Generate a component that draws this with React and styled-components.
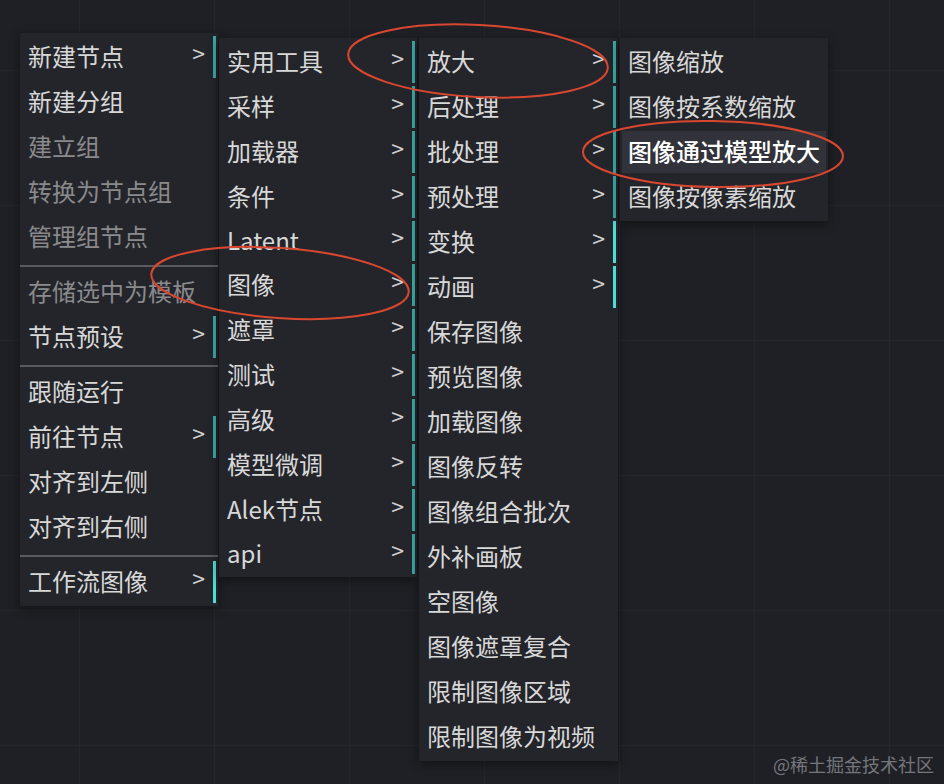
import React from 'react';
import styled, { createGlobalStyle } from 'styled-components';

const GlobalStyle = createGlobalStyle`
    html, body {
        margin: 0;
        padding: 0;
        background: #1f2025;
        overflow: hidden;
    }
`;

const Canvas = styled.div`
    position: relative;
    width: 944px;
    height: 784px;
    background-color: #1f2025;
    background-image:
        linear-gradient(to right, #25262c 1px, transparent 1px),
        linear-gradient(to bottom, #25262c 1px, transparent 1px);
    background-size: 135px 135px;
    background-position: 79px 70px;
    font-family: "Noto Sans CJK SC", "Noto Sans", sans-serif;
`;

const MenuRow = styled.div`
    display: flex;
    align-items: flex-start;
    padding: 33px 0 0 20px;
    gap: 1px;
`;

const Menu = styled.div`
    display: flex;
    flex-direction: column;
    gap: 3px;
    width: ${(p) => p.$width}px;
    margin-top: ${(p) => p.$offset || 0}px;
    margin-left: ${(p) => p.$shift || 0}px;
    padding: 3px 0;
    box-sizing: border-box;
    background: #24252b;
    box-shadow: 0 3px 10px rgba(0, 0, 0, 0.45);
`;

const Entry = styled.div`
    display: flex;
    align-items: center;
    justify-content: space-between;
    height: ${(p) => (p.$latin ? 40 : 42)}px;
    margin: 0 2px;
    padding: 0 8px 0 6px;
    box-sizing: border-box;
    font-size: 24px;
    line-height: 1;
    white-space: nowrap;
    color: ${(p) => (p.$disabled ? '#8a8a8c' : p.$active ? '#ffffff' : '#d8d8d8')};
    font-weight: ${(p) => (p.$active ? 500 : 400)};
    background: ${(p) => (p.$active ? '#31323a' : 'transparent')};
    border-right: ${(p) =>
        p.$sub ? `3px solid ${p.$bright ? '#4fdcd8' : '#3aa8a4'}` : '3px solid transparent'};

    & > span:first-child {
        transform: translateY(-1px);
    }
`;

const Arrow = styled.span`
    font-size: 23px;
    color: #d0d0d0;
    transform: translateY(-4px);
`;

const Separator = styled.div`
    height: 2px;
    margin: 4px 0 1px;
    background: #5a5b60;
`;

const Annotations = styled.svg`
    position: absolute;
    left: 0;
    top: 0;
    pointer-events: none;
`;

const Watermark = styled.div`
    position: absolute;
    right: 10px;
    bottom: 7px;
    font-size: 18px;
    color: #75767c;
    font-family: "Noto Sans CJK SC", sans-serif;
`;

const sep = { sep: true };

const menus = [
    {
        width: 198,
        offset: 0,
        items: [
            { label: '新建节点', sub: true },
            { label: '新建分组' },
            { label: '建立组', disabled: true },
            { label: '转换为节点组', disabled: true },
            { label: '管理组节点', disabled: true },
            sep,
            { label: '存储选中为模板', disabled: true },
            { label: '节点预设', sub: true },
            sep,
            { label: '跟随运行' },
            { label: '前往节点', sub: true },
            { label: '对齐到左侧' },
            { label: '对齐到右侧' },
            sep,
            { label: '工作流图像', sub: true, bright: true },
        ],
    },
    {
        width: 198,
        offset: 5,
        items: ['实用工具', '采样', '加载器', '条件', 'Latent', '图像', '遮罩', '测试', '高级', '模型微调', 'Alek节点', 'api'].map(
            (label) => ({ label, sub: true, latin: /^[A-Za-z]+$/.test(label) })
        ),
    },
    {
        width: 199,
        offset: 5,
        shift: 1,
        items: [
            { label: '放大', sub: true },
            { label: '后处理', sub: true },
            { label: '批处理', sub: true },
            { label: '预处理', sub: true },
            { label: '变换', sub: true, bright: true },
            { label: '动画', sub: true, bright: true },
            { label: '保存图像' },
            { label: '预览图像' },
            { label: '加载图像' },
            { label: '图像反转' },
            { label: '图像组合批次' },
            { label: '外补画板' },
            { label: '空图像' },
            { label: '图像遮罩复合' },
            { label: '限制图像区域' },
            { label: '限制图像为视频' },
        ],
    },
    {
        width: 208,
        offset: 5,
        shift: 1,
        items: [
            { label: '图像缩放' },
            { label: '图像按系数缩放' },
            { label: '图像通过模型放大', active: true },
            { label: '图像按像素缩放' },
        ],
    },
];

const App = () => {
    return (
        <Canvas>
            <GlobalStyle />
            <MenuRow>
                {menus.map((menu, mi) => (
                    <Menu key={mi} $width={menu.width} $offset={menu.offset} $shift={menu.shift}>
                        {menu.items.map((item, i) =>
                            item.sep ? (
                                <Separator key={i} />
                            ) : (
                                <Entry
                                    key={i}
                                    $sub={item.sub}
                                    $bright={item.bright}
                                    $disabled={item.disabled}
                                    $active={item.active}
                                    $latin={item.latin}
                                >
                                    <span>{item.label}</span>
                                    {item.sub && <Arrow>&gt;</Arrow>}
                                </Entry>
                            )
                        )}
                    </Menu>
                ))}
            </MenuRow>
            <Annotations width="944" height="784" viewBox="0 0 944 784">
                <g fill="none" stroke="#d9472f" strokeWidth="2">
                    <ellipse cx="478" cy="61" rx="130" ry="36" transform="rotate(3 478 61)" />
                    <ellipse cx="280" cy="283" rx="129" ry="35" transform="rotate(4 280 283)" />
                    <ellipse cx="713" cy="154" rx="130" ry="33" transform="rotate(1 713 154)" />
                </g>
            </Annotations>
            <Watermark>@稀土掘金技术社区</Watermark>
        </Canvas>
    );
};

export default App;
